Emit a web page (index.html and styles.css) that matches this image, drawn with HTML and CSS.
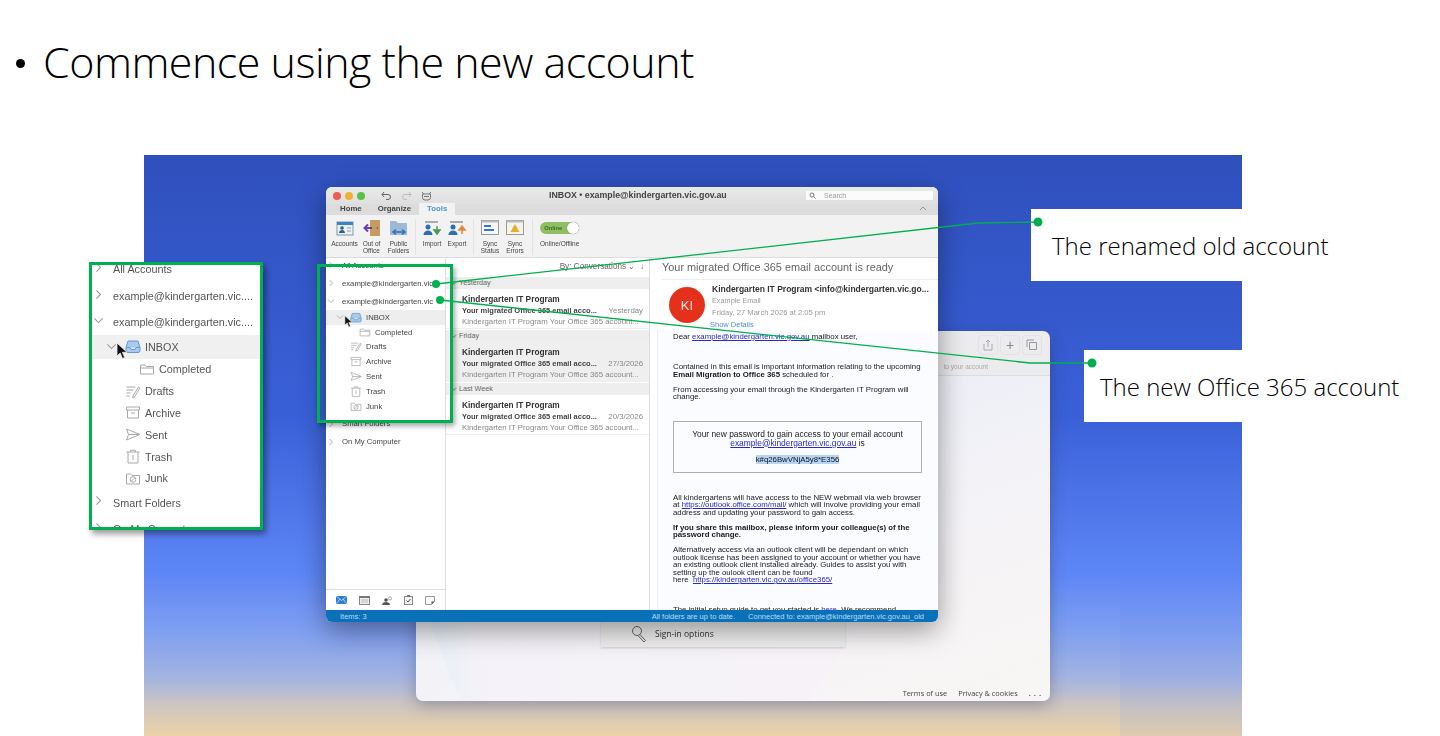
FILE: index.html
```html
<!DOCTYPE html>
<html lang="en">
<head>
	<meta charset="UTF-8">
	<meta name="viewport" content="width=device-width, initial-scale=1.0">
	<title>Commence using the new account</title>
	<link rel="stylesheet" href="styles.css">
</head>
<body>
	<svg class="defs" width="0" height="0">
		<symbol id="i-right" viewBox="0 0 8 8"><path d="M2.5 1 5.5 4 2.5 7" fill="none" stroke="#9a9a9a" stroke-width=".8"/></symbol>
		<symbol id="i-down" viewBox="0 0 8 8"><path d="M1 2.5 4 5.5 7 2.5" fill="none" stroke="#9a9a9a" stroke-width=".8"/></symbol>
		<symbol id="i-inbox" viewBox="0 0 16 14"><path d="M3 1.5h10l2 6.500v3a2 2 0 0 1-2 2H3a2 2 0 0 1-2-2V8z" fill="#a9c9ea" stroke="#5f9bd8"/><path d="M1.500 8H5l1 2h4l1-2h3.500" fill="#d9e8f6" stroke="#5f9bd8"/></symbol>
		<symbol id="i-folder" viewBox="0 0 16 14"><path d="M1.500 11.500V2.500h4.500l1.500 1.500h7v7.500z M1.500 5.500h13" fill="none" stroke="#a8a8a8"/></symbol>
		<symbol id="i-drafts" viewBox="0 0 16 14"><path d="M1.500 2.500h9M1.500 5.500h7M1.500 8.500h4M1.500 11.500h3M8 11.500l5.500-9 1.500 1-5.500 9-2 .5z" fill="none" stroke="#a8a8a8"/></symbol>
		<symbol id="i-archive" viewBox="0 0 16 14"><path d="M1.500 1.500h13v3h-13zM2.500 4.500v8h11v-8M6 7.500h4" fill="none" stroke="#a8a8a8"/></symbol>
		<symbol id="i-sent" viewBox="0 0 16 14"><path d="M1.500 1.500 15 7 1.500 12.500 3.500 7zM3.500 7H15" fill="none" stroke="#a8a8a8"/></symbol>
		<symbol id="i-trash" viewBox="0 0 16 14"><path d="M1.500 2.500h13M5.500 2.500V.8h5v1.700M3 2.500v11h10v-11M8 5.500v5" fill="none" stroke="#a8a8a8"/></symbol>
		<symbol id="i-junk" viewBox="0 0 16 14"><path d="M1.500 12.500V2.500h4l1.500 1.500h7.500v8.500z" fill="none" stroke="#a8a8a8"/><circle cx="8" cy="8" r="2.800" fill="none" stroke="#a8a8a8"/><path d="M6 10l4-4" stroke="#a8a8a8"/></symbol>
		<symbol id="i-cursor" viewBox="0 0 12 18"><path d="M1 1v13l3.200-3 2.300 5.500 2.200-1-2.300-5.200H11z" fill="#111" stroke="#eee" stroke-width=".8"/></symbol>
	</svg>

	<div class="slide">
		<h1 class="title"><span class="bullet"></span>Commence using the new account</h1>

		<div class="backdrop"></div>

		<!-- browser window behind outlook -->
		<div class="back-win">
			<div class="back-bar">
				<div class="back-tools">
					<span class="back-tool"><svg width="10" height="12" viewBox="0 0 10 12"><path d="M1 5v6h8V5M5 8V1M3 3l2-2 2 2" fill="none" stroke="#aaa"/></svg></span>
					<span class="back-tool">+</span>
					<span class="back-tool"><svg width="12" height="12" viewBox="0 0 12 12"><path d="M1 8V1h7M3.500 3.500h7v7h-7z" fill="none" stroke="#999"/></svg></span>
				</div>
				<div class="back-tab">to your account</div>
			</div>
			<div class="back-page">
				<div class="signin">
					<svg width="16" height="18" viewBox="0 0 16 18"><circle cx="6" cy="6" r="4.500" fill="none" stroke="#666"/><path d="M9 9.500l5.500 6-1.500 1.500-5.500-6" fill="none" stroke="#666"/></svg>
					<span>Sign-in options</span>
				</div>
				<div class="back-foot">
					<span>Terms of use</span>
					<span>Privacy &amp; cookies</span>
					<span class="back-dots">...</span>
				</div>
			</div>
		</div>

		<!-- outlook -->
		<div class="win">
			<div class="win-title">
				<div class="lights"><i class="red"></i><i class="amber"></i><i class="green"></i></div>
				<div class="quick">
					<svg width="11" height="9" viewBox="0 0 11 9"><path d="M3 1 1 3.500 3 6M1 3.500h6a2.500 2.500 0 0 1 0 5H5" fill="none" stroke="#666"/></svg>
					<svg width="11" height="9" viewBox="0 0 11 9"><path d="M8 1l2 2.500L8 6M10 3.500H4a2.500 2.500 0 0 0 0 5h2" fill="none" stroke="#bbb"/></svg>
					<svg width="11" height="10" viewBox="0 0 11 10"><path d="M1.500 3h8v3.500a2.500 2.500 0 0 1-2.500 2.500H4A2.500 2.500 0 0 1 1.500 6.500zM1 1l2 2M10 1 8 3M3 5.500h5" fill="none" stroke="#777"/></svg>
				</div>
				<div class="win-name">INBOX • example@kindergarten.vic.gov.au</div>
				<div class="search"><svg width="7" height="7" viewBox="0 0 7 7"><circle cx="3" cy="3" r="2" fill="none" stroke="#777"/><path d="M4.500 4.500 6.500 6.500" stroke="#777"/></svg>Search</div>
			</div>
			<div class="win-tabs">
				<span class="tab">Home</span>
				<span class="tab">Organize</span>
				<span class="tab tab-on">Tools</span>
				<svg class="tabs-up" width="8" height="5" viewBox="0 0 8 5"><path d="M1 4l3-3 3 3" fill="none" stroke="#999"/></svg>
			</div>
			<div class="ribbon">
				<div class="rib-group rib-a">
					<div class="rib-btn">
						<svg width="18" height="18" viewBox="0 0 18 18"><rect x="1" y="3" width="16" height="13" fill="#eef2f6" stroke="#7d98ad"/><rect x="1" y="3" width="16" height="3" fill="#3f83bd"/><circle cx="6" cy="9" r="1.800" fill="#2d5f8a"/><path d="M3 14c0-4 6-4 6 0z" fill="#2d5f8a"/><path d="M11 9h4M11 12h4" stroke="#8a9aa8"/></svg>
						<span>Accounts</span>
					</div>
					<div class="rib-btn">
						<svg width="18" height="18" viewBox="0 0 18 18"><rect x="7" y="1" width="10" height="16" fill="#c69a63"/><circle cx="14.500" cy="9" r=".8" fill="#6b4a22"/><path d="M9 9H2M5 5.500 1.500 9 5 12.500" fill="none" stroke="#6a3fb0" stroke-width="2"/></svg>
						<span>Out of<br>Office</span>
					</div>
					<div class="rib-btn">
						<svg width="20" height="18" viewBox="0 0 20 18"><path d="M1 2h6l2 2h9v12H1z" fill="#9db9d4"/><path d="M4 13h12M7 10.500 4 13l3 2.500M13 10.500l3 2.500-3 2.500" fill="none" stroke="#2f72bd" stroke-width="1.600"/></svg>
						<span>Public<br>Folders</span>
					</div>
				</div>
				<div class="rib-group rib-b">
					<div class="rib-btn">
						<svg width="20" height="18" viewBox="0 0 20 18"><rect x="3" y="2" width="13" height="2" fill="#aaa"/><circle cx="6" cy="8" r="2.500" fill="#2f6fb0"/><path d="M1.500 16c0-6 9-6 9 0z" fill="#2f6fb0"/><path d="M15 7v5M12 11h6l-3 4z" fill="#4a9b52" stroke="#4a9b52" stroke-width="1.500"/></svg>
						<span>Import</span>
					</div>
					<div class="rib-btn">
						<svg width="20" height="18" viewBox="0 0 20 18"><rect x="3" y="2" width="13" height="2" fill="#aaa"/><circle cx="6" cy="8" r="2.500" fill="#2f6fb0"/><path d="M1.500 16c0-6 9-6 9 0z" fill="#2f6fb0"/><path d="M15 15v-5M12 11h6l-3-4z" fill="#e8853a" stroke="#e8853a" stroke-width="1.500"/></svg>
						<span>Export</span>
					</div>
				</div>
				<div class="rib-group rib-c">
					<div class="rib-btn">
						<svg width="18" height="16" viewBox="0 0 18 16"><rect x=".5" y=".5" width="17" height="14" fill="#f4f6f8" stroke="#9a9a9a"/><rect x=".5" y=".5" width="17" height="2" fill="#bbb"/><path d="M3 6h7M3 10h10" stroke="#3a78bd" stroke-width="1.800"/></svg>
						<span>Sync<br>Status</span>
					</div>
					<div class="rib-btn">
						<svg width="18" height="16" viewBox="0 0 18 16"><rect x=".5" y=".5" width="17" height="14" fill="#f6f4ea" stroke="#9a9a9a"/><rect x=".5" y=".5" width="17" height="2" fill="#bbb"/><path d="M9 4l4.500 8h-9z" fill="#e9a92d"/></svg>
						<span>Sync<br>Errors</span>
					</div>
				</div>
				<div class="rib-group rib-last">
					<div class="rib-btn">
						<div class="toggle"><span>Online</span><i></i></div>
						<span>Online/Offline</span>
					</div>
				</div>
			</div>

			<div class="win-body">
				<div class="side">
					<div class="tree">
						<div class="node"><svg class="chev"><use href="#i-right"/></svg>All Accounts</div>
						<div class="node"><svg class="chev"><use href="#i-right"/></svg>example@kindergarten.vic</div>
						<div class="node"><svg class="chev"><use href="#i-down"/></svg>example@kindergarten.vic</div>
						<div class="node sub inbox"><svg class="chev"><use href="#i-down"/></svg><svg class="fic"><use href="#i-inbox"/></svg>INBOX</div>
						<div class="node sub2"><svg class="fic"><use href="#i-folder"/></svg>Completed</div>
						<div class="node sub1"><svg class="fic"><use href="#i-drafts"/></svg>Drafts</div>
						<div class="node sub1"><svg class="fic"><use href="#i-archive"/></svg>Archive</div>
						<div class="node sub1"><svg class="fic"><use href="#i-sent"/></svg>Sent</div>
						<div class="node sub1"><svg class="fic"><use href="#i-trash"/></svg>Trash</div>
						<div class="node sub1"><svg class="fic"><use href="#i-junk"/></svg>Junk</div>
						<div class="node gap"><svg class="chev"><use href="#i-right"/></svg>Smart Folders</div>
						<div class="node"><svg class="chev"><use href="#i-right"/></svg>On My Computer</div>
					</div>
					<div class="nav">
						<svg width="11" height="8" viewBox="0 0 11 8"><rect width="11" height="8" rx=".5" fill="#2f7fd0"/><path d="M0 0l5.500 4.500L11 0M0 8l4-5M11 8 7 3" fill="none" stroke="#fff" stroke-width=".6"/></svg>
						<svg width="11" height="9" viewBox="0 0 11 9"><rect x=".5" y=".5" width="10" height="8" fill="#eee" stroke="#888"/><rect width="11" height="2" fill="#777"/><path d="M2 4h7M2 6h7" stroke="#bbb"/></svg>
						<svg width="11" height="9" viewBox="0 0 11 9"><circle cx="4" cy="4" r="1.800" fill="#555"/><path d="M0 9c0-4 8-4 8 0z" fill="#555"/><circle cx="8" cy="2.500" r="1.600" fill="none" stroke="#777" stroke-width=".6"/></svg>
						<svg width="9" height="10" viewBox="0 0 9 10"><rect x=".5" y="1.500" width="8" height="8" fill="#f4f4f4" stroke="#888"/><rect x="3" y="0" width="3" height="2" fill="#777"/><path d="M2.500 5.500l1.500 1.500 2.500-3" fill="none" stroke="#555"/></svg>
						<svg width="10" height="9" viewBox="0 0 10 9"><path d="M.5.500h9v5l-3 3h-6z" fill="#fafafa" stroke="#999"/><path d="M9.500 5.500h-3v3z" fill="#555"/></svg>
					</div>
				</div>

				<div class="list">
					<div class="list-sort">By: Conversations ⌄ &nbsp;↓</div>
					<div class="day">Yesterday</div>
					<div class="msg">
						<div class="msg-from">Kindergarten IT Program</div>
						<div class="msg-sub"><span>Your migrated Office 365 email acco...</span><em>Yesterday</em></div>
						<div class="msg-pre">Kindergarten IT Program Your Office 365 account...</div>
					</div>
					<div class="day day-open">Friday</div>
					<div class="msg msg-on">
						<div class="msg-from">Kindergarten IT Program</div>
						<div class="msg-sub"><span>Your migrated Office 365 email acco...</span><em>27/3/2026</em></div>
						<div class="msg-pre">Kindergarten IT Program Your Office 365 account...</div>
					</div>
					<div class="day day-open">Last Week</div>
					<div class="msg">
						<div class="msg-from">Kindergarten IT Program</div>
						<div class="msg-sub"><span>Your migrated Office 365 email acco...</span><em>20/3/2026</em></div>
						<div class="msg-pre">Kindergarten IT Program Your Office 365 account...</div>
					</div>
				</div>

				<div class="read">
					<div class="read-sub">Your migrated Office 365 email account is ready</div>
					<div class="read-head">
						<div class="avatar">KI</div>
						<div class="read-meta">
							<div class="read-from">Kindergarten IT Program &lt;info@kindergarten.vic.go...</div>
							<div class="read-to">Example Email</div>
							<div class="read-date">Friday, 27 March 2026 at 2:05 pm</div>
							<div class="read-show">Show Details</div>
						</div>
					</div>
					<div class="mail">
						<p class="mail-dear">Dear <a>example@kindergarten.vic.gov.au</a> mailbox user,</p>
						<p class="mail-p1">Contained in this email is important information relating to the upcoming <b>Email Migration to Office 365</b> scheduled for .</p>
						<p>From accessing your email through the Kindergarten IT Program will change.</p>
						<div class="pw-box">
							<div>Your new password to gain access to your email account<br><a>example@kindergarten.vic.gov.au</a> is</div>
							<div class="pw"><mark>k#q26BwVNjA5y8*E356</mark></div>
						</div>
						<p>All kindergartens will have access to the NEW webmail via web browser at <a>https://outlook.office.com/mail/</a> which will involve providing your email address and updating your password to gain access.</p>
						<p><b>If you share this mailbox, please inform your colleague(s) of the password change.</b></p>
						<p>Alternatively access via an outlook client will be dependant on which outlook license has been assigned to your account or whether you have an existing outlook client installed already. Guides to assist you with setting up the oulook client can be found<br>here&nbsp; <a>https://kindergarten.vic.gov.au/office365/</a></p>
						<p class="mail-last">The initial setup guide to get you started is <a>here</a>. We recommend</p>
					</div>
				</div>
			</div>

			<div class="status">
				<span class="status-items">Items: 3</span>
				<span class="status-sync">All folders are up to date.</span>
				<span>Connected to: example@kindergarten.vic.gov.au_old</span>
			</div>
		</div>

		<svg class="cursor cursor-win"><use href="#i-cursor"/></svg>

		<!-- zoomed folder pane -->
		<div class="inset">
			<div class="tree tree-big">
				<div class="node"><svg class="chev"><use href="#i-right"/></svg>All Accounts</div>
				<div class="node"><svg class="chev"><use href="#i-right"/></svg>example@kindergarten.vic....</div>
				<div class="node"><svg class="chev"><use href="#i-down"/></svg>example@kindergarten.vic....</div>
				<div class="node sub inbox"><svg class="chev"><use href="#i-down"/></svg><svg class="fic"><use href="#i-inbox"/></svg>INBOX</div>
				<div class="node sub2"><svg class="fic"><use href="#i-folder"/></svg>Completed</div>
				<div class="node sub1"><svg class="fic"><use href="#i-drafts"/></svg>Drafts</div>
				<div class="node sub1"><svg class="fic"><use href="#i-archive"/></svg>Archive</div>
				<div class="node sub1"><svg class="fic"><use href="#i-sent"/></svg>Sent</div>
				<div class="node sub1"><svg class="fic"><use href="#i-trash"/></svg>Trash</div>
				<div class="node sub1"><svg class="fic"><use href="#i-junk"/></svg>Junk</div>
				<div class="node gap"><svg class="chev"><use href="#i-right"/></svg>Smart Folders</div>
				<div class="node"><svg class="chev"><use href="#i-right"/></svg>On My Computer</div>
			</div>
		</div>
		<svg class="cursor cursor-big"><use href="#i-cursor"/></svg>

		<div class="hilite"></div>

		<div class="note note-old">The renamed old account</div>
		<div class="note note-new">The new Office 365 account</div>

		<svg class="wires" width="1440" height="736" viewBox="0 0 1440 736">
			<polyline points="436,284 978,223 1038,222"/>
			<polyline points="440,300 1030,363 1092,363"/>
			<circle cx="436" cy="284" r="4"/>
			<circle cx="440" cy="300" r="4"/>
			<circle cx="1038" cy="222" r="4.500"/>
			<circle cx="1092" cy="363" r="4.500"/>
		</svg>
	</div>
</body>
</html>
```

FILE: styles.css
```css
*{
	box-sizing: border-box;
}

body{
	margin: 0;
	background: #fff;
	font-family: "Liberation Sans", Arial, sans-serif;
}

.defs{
	position: absolute;
}

.slide{
	position: relative;
	width: 1440px;
	height: 736px;
	overflow: hidden;
	background: #fff;
}

.title{
	margin: 0;
	padding: 33px 0 0 16px;
	display: flex;
	align-items: center;
	font-family: "Open Sans", sans-serif;
	font-weight: 300;
	font-size: 43px;
	letter-spacing: -.5px;
	line-height: 58px;
	color: #000;
}

.bullet{
	width: 9px;
	height: 9px;
	margin: 2px 18px 0 0;
	border-radius: 50%;
	background: #000;
}

.backdrop{
	position: absolute;
	left: 144px;
	top: 155px;
	width: 1098px;
	height: 581px;
	background: linear-gradient(180deg, #2f50bd 0%, #3a60d8 45%, #5d86f6 72%, #7f9ff0 82%, #a4b4e0 90%, #cfc6bf 95%, #ecd2a8 100%);
}

.backdrop::after{
	content: "";
	position: absolute;
	right: 0;
	top: 240px;
	width: 122px;
	bottom: 0;
	background: linear-gradient(180deg, rgba(90,125,240,0) 0%, rgba(90,125,240,.1) 80%, rgba(120,150,230,.12) 100%);
}

/* back window */
.back-win{
	position: absolute;
	left: 416px;
	top: 331px;
	width: 634px;
	height: 370px;
	border-radius: 7px;
	overflow: hidden;
	display: flex;
	flex-direction: column;
	box-shadow: 0 4px 16px rgba(30,30,60,.3);
	filter: blur(.3px);
}

.back-bar{
	height: 45px;
	background: #ececee;
	border-bottom: 1px solid #dcdcde;
	padding: 4px 8px 0 0;
	position: relative;
	flex: none;
}

.back-tools{
	display: flex;
	justify-content: flex-end;
	gap: 2px;
}

.back-tool{
	width: 20px;
	height: 20px;
	display: flex;
	justify-content: center;
	align-items: center;
	border: 1px solid #e2e2e4;
	border-radius: 4px;
	color: #888;
	font-size: 14px;
}

.back-tab{
	margin-top: 8px;
	text-align: right;
	padding-right: 54px;
	font-size: 6.500px;
	color: #aaa;
}

.back-page{
	flex: 1;
	position: relative;
	background: linear-gradient(160deg, #e4e8f3 0%, #f0f1f7 45%, #f7f4f6 75%, #f8f6f4 100%);
}

.back-page::before{
	content: "";
	position: absolute;
	inset: 0;
	background: linear-gradient(90deg, #e2f0f5 0%, #f4f2f8 10%, #f8f3f7 100%);
	clip-path: polygon(1% 70%, 72% 70%, 62% 100%, 7% 100%);
}

.signin{
	position: absolute;
	left: 185px;
	top: 244px;
	width: 244px;
	height: 27px;
	padding-left: 30px;
	display: flex;
	align-items: center;
	gap: 8px;
	background: #f0f0f0;
	box-shadow: 0 1px 2px rgba(0,0,0,.15);
	font-family: "Open Sans", sans-serif;
	font-size: 8.500px;
	color: #333;
	z-index: 1;
}

.back-foot{
	position: absolute;
	right: 6px;
	bottom: 3px;
	display: flex;
	gap: 11px;
	font-family: "Open Sans", sans-serif;
	font-size: 7.400px;
	color: #444;
	z-index: 1;
}

.back-dots{
	font-weight: bold;
	letter-spacing: 3px;
}

/* outlook window */
.win{
	position: absolute;
	left: 326px;
	top: 187px;
	width: 612px;
	height: 435px;
	border-radius: 6px;
	overflow: hidden;
	display: flex;
	flex-direction: column;
	background: #fff;
	box-shadow: 0 8px 28px rgba(0,0,0,.4);
	filter: blur(.35px);
}

.win-title{
	height: 17px;
	display: flex;
	align-items: center;
	padding: 0 5px 0 7px;
	background: linear-gradient(#e9e9e9, #dfdfdf);
	position: relative;
	flex: none;
}

.lights{
	display: flex;
	gap: 4px;
}

.lights i{
	width: 8px;
	height: 8px;
	border-radius: 50%;
}

.red{
	background: #ee5c54;
}

.amber{
	background: #f0b034;
}

.green{
	background: #5bbf4a;
}

.quick{
	display: flex;
	gap: 9px;
	margin-left: 16px;
	align-items: center;
}

.win-name{
	position: absolute;
	left: 223px;
	top: 3px;
	font-size: 8.800px;
	font-weight: bold;
	color: #444;
}

.search{
	margin-left: auto;
	width: 127px;
	height: 9px;
	display: flex;
	align-items: center;
	gap: 8px;
	padding-left: 3px;
	background: #fbfbfb;
	border-radius: 1px;
	font-size: 7px;
	color: #999;
}

.win-tabs{
	height: 11px;
	display: flex;
	align-items: flex-end;
	padding-left: 6px;
	background: #dcdcdc;
	flex: none;
	position: relative;
}

.tab{
	padding: 0 8px;
	height: 12px;
	line-height: 12px;
	font-size: 7.800px;
	font-weight: bold;
	color: #444;
}

.tab-on{
	background: #f2f2f2;
	color: #4f94c9;
}

.tabs-up{
	position: absolute;
	right: 11px;
	top: 2px;
}

.ribbon{
	height: 43px;
	display: flex;
	padding-top: 4px;
	background: #f2f2f2;
	border-bottom: 1px solid #ddd;
	flex: none;
}

.rib-group{
	display: flex;
	height: 36px;
	border-right: 1px solid #e2e2e2;
}

.rib-a{
	width: 90px;
	padding-left: 5px;
}

.rib-a .rib-btn{
	width: 27px;
}

.rib-b{
	width: 58px;
	padding-left: 3.500px;
}

.rib-c{
	width: 58.700px;
	padding-left: 3.500px;
}

.rib-last{
	border-right: 0;
}

.rib-btn{
	width: 25px;
	display: flex;
	flex-direction: column;
	align-items: center;
	font-size: 6.500px;
	line-height: 7px;
	color: #444;
	text-align: center;
	white-space: nowrap;
}

.rib-btn svg{
	height: 18px;
	margin-bottom: 3px;
	flex: none;
}

.rib-last .rib-btn{
	width: 54px;
}

.toggle{
	width: 39px;
	height: 12px;
	margin: 3px 0 6px;
	border-radius: 6px;
	background: #8fbf62;
	display: flex;
	align-items: center;
	justify-content: space-between;
	padding-left: 4px;
	color: #3e6b22;
	font-size: 5.800px;
	font-weight: bold;
}

.toggle i{
	width: 12px;
	height: 12px;
	border-radius: 50%;
	background: #fff;
	box-shadow: 0 0 1px #555;
}

.win-body{
	flex: 1;
	display: flex;
	min-height: 0;
	background: #fff;
}

/* folder tree */
.side{
	width: 120px;
	border-right: 1px solid #ddd;
	display: flex;
	flex-direction: column;
	flex: none;
	background: #fff;
}

.tree{
	flex: 1;
	font-size: 7.700px;
	color: #444;
	white-space: nowrap;
	overflow: hidden;
}

.side .tree{
	margin-top: -2px;
}

.node{
	height: 18px;
	padding-left: 16px;
	display: flex;
	align-items: center;
	position: relative;
}

.chev{
	position: absolute;
	left: 1px;
	top: 5px;
	width: 8px;
	height: 8px;
}

.fic{
	width: 12px;
	height: 11px;
	margin-right: 4px;
	flex: none;
}

.tree .sub1,
.tree .sub2,
.tree .inbox{
	height: 14.800px;
}

.sub1{
	padding-left: 24px;
}

.sub2{
	padding-left: 33px;
}

.inbox{
	padding-left: 24px;
	background: #eeeeee;
}

.inbox .chev{
	left: 10px;
	top: 3px;
}

.gap{
	margin-top: 1px;
}

.nav{
	height: 21px;
	border-top: 1px solid #ddd;
	display: flex;
	align-items: center;
	justify-content: space-between;
	padding: 0 10px;
	flex: none;
}

/* message list */
.list{
	width: 204px;
	border-right: 1px solid #ddd;
	display: flex;
	flex-direction: column;
	flex: none;
	color: #555;
}

.list-sort{
	height: 19px;
	padding-right: 5px;
	text-align: right;
	line-height: 18px;
	font-size: 8.200px;
	color: #666;
}

.day{
	height: 12px;
	line-height: 12px;
	padding-left: 13px;
	background: #eeeeee;
	font-size: 7.200px;
	color: #666;
	position: relative;
}

.day::before{
	content: "";
	position: absolute;
	left: 6px;
	top: 3px;
	width: 3px;
	height: 3px;
	border-right: 1px solid #aaa;
	border-bottom: 1px solid #aaa;
	transform: rotate(45deg);
}

.day-open{
	margin-top: 1px;
}

.msg{
	height: 40px;
	padding: 5px 6px 0 16px;
	border-bottom: 1px solid #eee;
	font-size: 8px;
	line-height: 11px;
	white-space: nowrap;
}

.msg-on{
	background: #efefef;
}

.msg-from{
	font-weight: bold;
	color: #333;
	font-size: 8.300px;
}

.msg-sub{
	display: flex;
	justify-content: space-between;
	font-size: 7.500px;
	font-weight: bold;
	color: #444;
}

.msg-sub em{
	font-style: normal;
	font-weight: normal;
	font-size: 7.800px;
	color: #888;
}

.msg-pre{
	font-size: 7.800px;
	color: #888;
}

/* reading pane */
.read{
	flex: 1;
	min-width: 0;
	overflow: hidden;
	display: flex;
	flex-direction: column;
	color: #222;
}

.read-sub{
	height: 22px;
	margin-left: 12px;
	line-height: 19px;
	font-size: 10.900px;
	color: #666;
	border-bottom: 1px solid #eee;
	flex: none;
}

.read-head{
	height: 50px;
	display: flex;
	flex: none;
	padding: 3px 0 0 19px;
}

.avatar{
	width: 36px;
	height: 36px;
	margin-top: 4px;
	border-radius: 50%;
	background: #e5301c;
	color: #fde5df;
	font-size: 13px;
	display: flex;
	justify-content: center;
	align-items: center;
	flex: none;
}

.read-meta{
	margin-left: 7px;
	font-size: 7.600px;
	line-height: 12px;
	color: #999;
	white-space: nowrap;
}

.read-from{
	font-size: 8.500px;
	font-weight: bold;
	color: #333;
}

.read-to{
	font-size: 7.300px;
}

.read-show{
	margin-left: -2px;
	font-size: 7.500px;
	color: #4b8fc9;
}

.mail{
	flex: 1;
	margin-left: 7px;
	padding: 0 16px 0 15px;
	border-left: 1px solid #eee;
	background: #fbfcff;
	font-size: 7.800px;
	line-height: 7.500px;
	color: #1a1a1a;
}

.mail p{
	margin: 0 0 7.500px;
}

.mail a{
	color: #2a2ac0;
	text-decoration: underline;
}

.mail-dear{
	padding-top: 3px;
}

.mail .mail-dear{
	margin-bottom: 22.500px;
}

.pw-box{
	margin: 20px 0 21px;
	height: 52px;
	padding-top: 8px;
	border: 1px solid #b0b0b0;
	text-align: center;
	font-size: 8.400px;
	line-height: 9px;
}

.pw{
	margin-top: 7px;
	font-size: 7.800px;
}

.pw mark{
	background: #b5d5f5;
	color: #111;
}

.mail .mail-last{
	margin-top: 22px;
}

.status{
	height: 12px;
	display: flex;
	align-items: center;
	justify-content: flex-end;
	padding: 0 14px;
	background: #0a70b8;
	color: #b8dcf5;
	font-size: 7.500px;
	flex: none;
	position: relative;
}

.status-items{
	margin-right: auto;
}

.status-sync{
	margin-right: 13px;
}

/* enlarged copy */
.inset{
	position: absolute;
	left: 89px;
	top: 262px;
	width: 174px;
	height: 268px;
	border: 3px solid #00b050;
	background: #fff;
	box-shadow: 3px 4px 6px rgba(0,0,0,.4);
	overflow: hidden;
}

.tree-big{
	margin-top: -9px;
	font-size: 10.800px;
	color: #555;
	filter: blur(.4px);
	height: 280px;
}

.tree-big .node{
	height: 26.500px;
	padding-left: 21px;
}

.tree-big .chev{
	left: 1px;
	top: 6px;
	width: 11px;
	height: 11px;
}

.tree-big .fic{
	width: 16px;
	height: 15px;
	margin-right: 4px;
}

.tree-big .sub1,
.tree-big .sub2,
.tree-big .inbox{
	height: 21.800px;
}

.tree-big .sub1{
	padding-left: 33px;
}

.tree-big .sub2{
	padding-left: 47px;
}

.tree-big .inbox{
	padding-left: 33px;
	height: 24px;
	margin-top: -1px;
	background: #f0f0f0;
}

.tree-big .inbox .chev{
	left: 14px;
	top: 6px;
}

.tree-big .gap{
	margin-top: 0;
}

.cursor{
	position: absolute;
}

.cursor-win{
	left: 344px;
	top: 315px;
	width: 9px;
	height: 13px;
}

.cursor-big{
	left: 116px;
	top: 342px;
	width: 12px;
	height: 18px;
}

.hilite{
	position: absolute;
	left: 317px;
	top: 264px;
	width: 136px;
	height: 159px;
	border: 3px solid #00b050;
	box-shadow: 2px 3px 5px rgba(0,0,0,.35);
}

/* callouts */
.note{
	position: absolute;
	height: 72px;
	background: #fff;
	font-family: "Open Sans", sans-serif;
	font-weight: 300;
	font-size: 24px;
	color: #000;
	white-space: nowrap;
}

.note-old{
	left: 1031px;
	top: 209px;
	width: 310px;
	padding: 20px 0 0 21px;
}

.note-new{
	left: 1084px;
	top: 350px;
	width: 330px;
	padding: 20px 0 0 16px;
}

.wires{
	position: absolute;
	left: 0;
	top: 0;
}

.wires polyline{
	fill: none;
	stroke: #00b050;
	stroke-width: 1.300;
}

.wires circle{
	fill: #00b050;
}
```
